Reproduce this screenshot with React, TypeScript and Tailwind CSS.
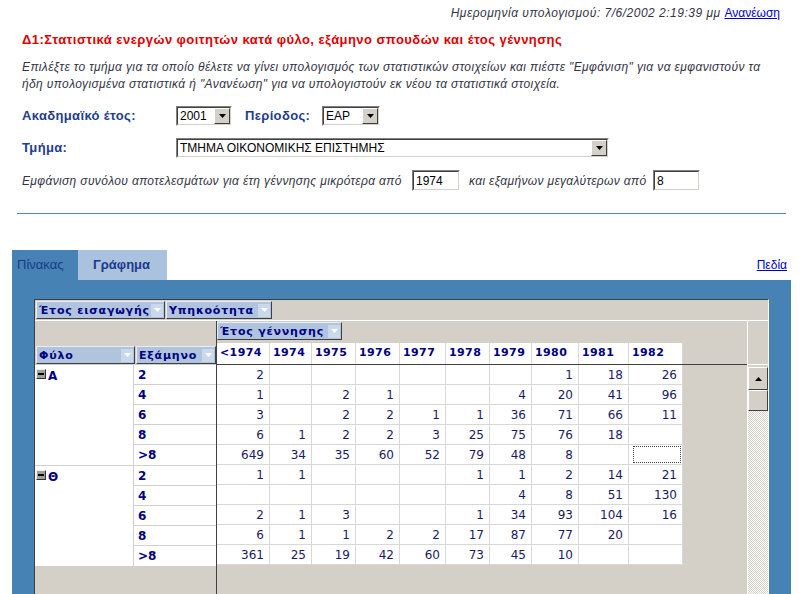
const years = ["<1974", "1974", "1975", "1976", "1977", "1978", "1979", "1980", "1981", "1982"];
const colClass = [
  "w-[53px]",
  "w-[42px]",
  "w-[44px]",
  "w-[44px]",
  "w-[46px]",
  "w-[44px]",
  "w-[42px]",
  "w-[47px]",
  "w-[50px]",
  "w-[54px]",
];

type Group = { sex: string; rows: { sem: string; values: (number | null)[] }[] };

const groups: Group[] = [
  {
    sex: "Α",
    rows: [
      { sem: "2", values: [2, null, null, null, null, null, null, 1, 18, 26] },
      { sem: "4", values: [1, null, 2, 1, null, null, 4, 20, 41, 96] },
      { sem: "6", values: [3, null, 2, 2, 1, 1, 36, 71, 66, 11] },
      { sem: "8", values: [6, 1, 2, 2, 3, 25, 75, 76, 18, null] },
      { sem: ">8", values: [649, 34, 35, 60, 52, 79, 48, 8, null, null] },
    ],
  },
  {
    sex: "Θ",
    rows: [
      { sem: "2", values: [1, 1, null, null, null, 1, 1, 2, 14, 21] },
      { sem: "4", values: [null, null, null, null, null, null, 4, 8, 51, 130] },
      { sem: "6", values: [2, 1, 3, null, null, 1, 34, 93, 104, 16] },
      { sem: "8", values: [6, 1, 1, 2, 2, 17, 87, 77, 20, null] },
      { sem: ">8", values: [361, 25, 19, 42, 60, 73, 45, 10, null, null] },
    ],
  },
];

function SelectBox({ value, className }: { value: string; className: string }) {
  return (
    <div
      className={`flex h-[20px] items-center border border-t-[#808080] border-l-[#808080] border-b-white border-r-white ${className}`}
    >
      <div className="flex h-full w-full items-center border border-t-[#404040] border-l-[#404040] border-b-[#d4d0c8] border-r-[#d4d0c8] bg-white">
        <span className="flex-1 truncate pl-[2px] text-[12px] leading-none text-black">{value}</span>
        <DropButton />
      </div>
    </div>
  );
}

function DropButton() {
  return (
    <span className="flex h-[16px] w-[16px] items-center justify-center border border-t-[#ffffff] border-l-[#ffffff] border-b-[#404040] border-r-[#404040] bg-[#d4d0c8]">
      <svg width="7" height="4" viewBox="0 0 7 4">
        <path d="M0 0h7L3.5 4z" fill="#000" />
      </svg>
    </span>
  );
}

function TextBox({ value, className }: { value: string; className: string }) {
  return (
    <div
      className={`h-[21px] border border-t-[#808080] border-l-[#808080] border-b-white border-r-white ${className}`}
    >
      <div className="flex h-full items-center border border-t-[#404040] border-l-[#404040] border-b-[#d4d0c8] border-r-[#d4d0c8] bg-white pl-[2px] text-[12px] not-italic tracking-normal text-black">
        {value}
      </div>
    </div>
  );
}

function FieldButton({ label, className }: { label: string; className: string }) {
  return (
    <div
      className={`flex h-[18px] items-center border border-t-[#e6edf6] border-l-[#e6edf6] border-b-[#404040] border-r-[#404040] bg-[#b0c4de] pl-[2px] ${className}`}
    >
      <span className="flex-1 truncate text-[11px] font-bold leading-none tracking-[0.8px] text-[#000080]">
        {label}
      </span>
      <span className="mr-[1px] flex h-[13px] w-[12px] items-center justify-center bg-[#cad8eb]">
        <svg width="7" height="4" viewBox="0 0 7 4">
          <path d="M0 0h7L3.5 4z" fill="#fff" />
        </svg>
      </span>
    </div>
  );
}

function MinusBox() {
  return (
    <span className="mr-[2px] flex h-[10px] w-[10px] items-center justify-center border border-t-[#f0f0f0] border-l-[#f0f0f0] border-b-[#303030] border-r-[#303030] bg-[#a0a0a0]">
      <span className="h-[2px] w-[6px] bg-black" />
    </span>
  );
}

export default function App() {
  return (
    <div className="flex h-[594px] w-[803px] flex-col overflow-hidden bg-white font-['Liberation_Sans',Arial,sans-serif]">
      <div className="pr-[23px] pt-[5px] text-right text-[12px] leading-[16px] text-[#333344]">
        <span className="italic tracking-[0.5px]">Ημερομηνία υπολογισμού: 7/6/2002 2:19:39 μμ </span>
        <a className="text-[#0000cc] underline">Ανανέωση</a>
      </div>

      <h1 className="ml-[22px] mt-[11px] text-[13px] font-bold leading-[16px] tracking-[0.45px] text-[#e00000]">
        Δ1:Στατιστικά ενεργών φοιτητών κατά φύλο, εξάμηνο σπουδών και έτος γέννησης
      </h1>

      <p className="ml-[22px] mt-[11px] whitespace-nowrap text-[12px] italic leading-[17px] tracking-[0.38px] text-[#333344]">
        Επιλέξτε το τμήμα για τα οποίο θέλετε να γίνει υπολογισμός των στατιστικών στοιχείων και πιέστε
        "Εμφάνιση" για να εμφανιστούν τα
        <br />
        ήδη υπολογισμένα στατιστικά ή "Ανανέωση" για να υπολογιστούν εκ νέου τα στατιστικά στοιχεία.
      </p>

      <div className="ml-[22px] mt-[13px] flex flex-col gap-[12px]">
        <div className="flex items-center">
          <span className="w-[154px] text-[13px] font-bold tracking-[0.35px] text-[#1f3d8c]">Ακαδημαϊκό έτος:</span>
          <SelectBox value="2001" className="w-[56px]" />
          <span className="ml-[13px] w-[77px] text-[13px] font-bold tracking-[0.35px] text-[#1f3d8c]">Περίοδος:</span>
          <SelectBox value="ΕΑΡ" className="w-[58px]" />
        </div>
        <div className="flex items-center">
          <span className="w-[154px] text-[13px] font-bold tracking-[0.35px] text-[#1f3d8c]">Τμήμα:</span>
          <SelectBox value="ΤΜΗΜΑ ΟΙΚΟΝΟΜΙΚΗΣ ΕΠΙΣΤΗΜΗΣ" className="w-[433px]" />
        </div>
        <div className="flex items-center text-[12px] italic tracking-[0.35px] text-[#333344]">
          <span className="w-[390px]">Εμφάνιση συνόλου αποτελεσμάτων για έτη γέννησης μικρότερα από</span>
          <TextBox value="1974" className="w-[48px]" />
          <span className="ml-[9px] w-[184px]">και εξαμήνων μεγαλύτερων από</span>
          <TextBox value="8" className="w-[47px]" />
        </div>
      </div>

      <div className="ml-[17px] mr-[17px] mt-[22px] h-px bg-[#4f86b8]" />

      <div className="ml-[12px] mr-[12px] mt-[36px] flex flex-1 flex-col">
        <div className="flex h-[30px] items-stretch">
          <div className="flex w-[66px] items-center bg-[#4682b4] pl-[5px] text-[13px] text-[#1a3a8c]">
            Πίνακας
          </div>
          <div className="flex w-[89px] items-center bg-[#aac2de] pl-[15px] text-[13px] font-bold text-[#1a3a8c]">
            Γράφημα
          </div>
          <div className="flex flex-1 items-center justify-end pr-[4px]">
            <a className="text-[12px] text-[#0000cc] underline">Πεδία</a>
          </div>
        </div>

        <div className="flex flex-1 flex-col bg-[#4682b4] pl-[22px] pr-[22px] pt-[19px]">
          <div className="flex flex-1 flex-col border-l border-t border-r border-l-[#404040] border-t-[#404040] border-r-white bg-[#d4d0c8] font-['DejaVu_Sans',Verdana,sans-serif]">
            <div className="flex h-[20px] items-center gap-[1px] pl-[1px]">
              <FieldButton label="Έτος εισαγωγής" className="w-[129px]" />
              <FieldButton label="Υπηκοότητα" className="w-[106px]" />
            </div>
            <div className="h-px bg-white" />

            <div className="flex flex-1">
              <div className="flex w-[181px] flex-col">
                <div className="flex h-[44px] items-end gap-[1px] pb-[1px] pl-[1px]">
                  <FieldButton label="Φύλο" className="w-[99px]" />
                  <FieldButton label="Εξάμηνο" className="w-[80px]" />
                </div>
                {groups.map((g) => (
                  <div key={g.sex} className="flex border-b border-[#d0d0d0] bg-white">
                    <div className="flex w-[99px] items-start border-r border-[#d0d0d0] pl-[1px] pt-[4px]">
                      <MinusBox />
                      <span className="text-[12px] font-bold leading-[14px] text-[#000080]">{g.sex}</span>
                    </div>
                    <div className="flex flex-1 flex-col">
                      {g.rows.map((r, i) => (
                        <div
                          key={r.sem}
                          className={`flex h-[20px] items-center pl-[4px] text-[12px] font-bold text-[#000080] ${
                            i < g.rows.length - 1 ? "border-b border-[#d0d0d0]" : ""
                          }`}
                        >
                          {r.sem}
                        </div>
                      ))}
                    </div>
                  </div>
                ))}
              </div>

              <div className="flex w-[531px] flex-col border-l border-[#404040]">
                <div className="flex h-[22px] items-start pt-[1px]">
                  <FieldButton label="Έτος γέννησης" className="w-[125px]" />
                </div>
                <div className="flex h-[22px] border-b border-[#404040]">
                  <div className="flex bg-white">
                    {years.map((y, i) => (
                      <div
                        key={y}
                        className={`flex items-center border-r border-[#d8d8d8] pl-[3px] text-[11px] font-bold tracking-[0.4px] text-[#000080] ${colClass[i]}`}
                      >
                        {y}
                      </div>
                    ))}
                  </div>
                  <div className="flex-1" />
                </div>
                {groups.map((g) =>
                  g.rows.map((r, ri) => (
                    <div key={g.sex + r.sem} className="flex h-[20px]">
                      <div className="flex bg-white">
                        {r.values.map((v, i) => {
                          const selected = g.sex === "Α" && ri === 4 && i === 9;
                          return (
                            <div
                              key={i}
                              className={`flex items-center justify-end border-b border-r border-[#d8d8d8] pr-[5px] text-[12px] text-[#1a1a60] ${colClass[i]}`}
                            >
                              {selected ? (
                                <div className="mr-[-4px] h-[17px] w-full border border-dotted border-[#444]" />
                              ) : (
                                v
                              )}
                            </div>
                          );
                        })}
                      </div>
                    </div>
                  )),
                )}
              </div>

              <div className="flex w-[21px] flex-col border-l border-white">
                <div className="h-[44px] border-b border-white" />
                <div className="h-[2px]" />
                <div className="flex h-[23px] items-center justify-center border border-t-white border-l-white border-b-[#404040] border-r-[#404040] bg-[#d4d0c8]">
                  <svg width="7" height="4" viewBox="0 0 7 4">
                    <path d="M0 4h7L3.5 0z" fill="#000" />
                  </svg>
                </div>
                <div className="h-[21px] border border-t-white border-l-white border-b-[#404040] border-r-[#404040] bg-[#d4d0c8]" />
                <div className="flex-1 bg-[repeating-conic-gradient(#d4d0c8_0%_25%,#ffffff_0%_50%)] bg-[length:2px_2px]" />
              </div>
            </div>
          </div>
        </div>
      </div>
    </div>
  );
}
